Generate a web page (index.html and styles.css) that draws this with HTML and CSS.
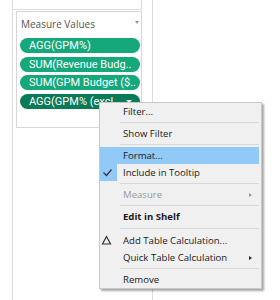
FILE: index.html
```html
<!DOCTYPE html>
<html>
<head>
<meta charset="utf-8">
<link rel="stylesheet" href="styles.css">
</head>
<body>
<div class="panel">
  <div class="prev"></div>
  <div class="card">
    <div class="card-head"><span class="title">Measure Values</span><span class="caret"></span></div>
    <div class="pills">
      <div class="pill">AGG(GPM%)</div>
      <div class="pill">SUM(Revenue Budg..</div>
      <div class="pill">SUM(GPM Budget ($..</div>
      <div class="pill sel">AGG(GPM% (excl..<span class="pcaret"></span></div>
    </div>
  </div>
</div>
<div class="menu">
  <div class="item"><span class="gut"></span><span class="label">Filter...</span></div>
  <div class="sep"></div>
  <div class="item"><span class="gut"></span><span class="label">Show Filter</span></div>
  <div class="sep"></div>
  <div class="item hl"><span class="gut"></span><span class="label">Format...</span></div>
  <div class="item"><span class="gut checked"><svg width="17" height="17" viewBox="0 0 17 17"><polyline points="3.5,8.5 6.5,11.5 11.5,5.5" fill="none" stroke="#333" stroke-width="1.2"/></svg></span><span class="label">Include in Tooltip</span></div>
  <div class="sep"></div>
  <div class="item disabled"><span class="gut"></span><span class="label">Measure</span><span class="sub grey"></span></div>
  <div class="sep"></div>
  <div class="item bold"><span class="gut"></span><span class="label">Edit in Shelf</span></div>
  <div class="sep wide"></div>
  <div class="item"><span class="gut"><svg width="17" height="17" viewBox="0 0 17 17"><polygon points="6.5,4.5 10.5,12 2.5,12" fill="none" stroke="#333" stroke-width="1.2"/></svg></span><span class="label">Add Table Calculation...</span></div>
  <div class="item"><span class="gut"></span><span class="label">Quick Table Calculation</span><span class="sub"></span></div>
  <div class="sep"></div>
  <div class="item"><span class="gut"></span><span class="label">Remove</span></div>
</div>
</body>
</html>
```
FILE: styles.css
```css
html, body {
  margin: 0;
  padding: 0;
  background: #ffffff;
}
body {
  width: 280px;
  height: 300px;
  overflow: hidden;
  position: relative;
  font-family: "Open Sans", sans-serif;
}
.panel {
  margin-left: 12px;
  width: 139px;
  height: 300px;
  border-left: 1px solid #dcdcdc;
  border-right: 1px solid #dcdcdc;
}
.prev {
  height: 9px;
  width: 128px;
  border-right: 1px solid #dcdcdc;
  border-bottom: 1px solid #dcdcdc;
}
.card {
  margin: 1px 0 0 3px;
  width: 124px;
  height: 115px;
  border: 1px solid #d6d6d6;
  background: #fff;
}
.card-head {
  display: flex;
  align-items: center;
  justify-content: space-between;
  height: 22px;
  padding: 0 2px 0 4px;
  margin-top: 1px;
}
.title {
  font-size: 10px;
  color: #555;
}
.caret {
  width: 0;
  height: 0;
  border-left: 2.5px solid transparent;
  border-right: 2.5px solid transparent;
  border-top: 3px solid #999;
  margin-top: -4px;
}
.pills {
  display: flex;
  flex-direction: column;
  gap: 3.5px;
  padding: 3px 1px 0 3px;
}
.pill {
  height: 15px;
  line-height: 15px;
  border-radius: 7.5px;
  background: #14a87b;
  color: #fff;
  font-family: "Roboto", sans-serif;
  font-size: 11px;
  padding-left: 9px;
  white-space: nowrap;
  overflow: hidden;
  display: flex;
  align-items: center;
}
.pill.sel {
  background: #0b7a57;
}
.pcaret {
  margin-left: auto;
  margin-right: 8px;
  width: 0;
  height: 0;
  border-left: 3px solid transparent;
  border-right: 3px solid transparent;
  border-top: 3px solid #fff;
}
.menu {
  position: absolute;
  left: 99px;
  top: 102px;
  width: 161px;
  padding: 0;
  background: #f0f0f0;
  border: 1px solid #c8c8c8;
  box-shadow: 2px 2px 2px rgba(0, 0, 0, 0.35);
  font-size: 9.6px;
  color: #1a1a1a;
}
.item {
  display: flex;
  align-items: center;
  height: 17px;
  margin-right: 2px;
}
.gut {
  width: 17px;
  height: 17px;
  flex: none;
  margin-right: 6px;
}
.gut svg {
  display: block;
}
.gut.checked {
  background: #91c9f7;
}
.item.hl {
  background: #91c9f7;
}
.item.disabled {
  color: #9a9a9a;
}
.item.bold {
  font-weight: bold;
}
.sub {
  margin-left: auto;
  margin-right: 7px;
  width: 0;
  height: 0;
  border-top: 2.5px solid transparent;
  border-bottom: 2.5px solid transparent;
  border-left: 3px solid #222;
}
.sub.grey {
  border-left-color: #9a9a9a;
}
.sep {
  height: 1px;
  background: #d8d8d8;
  margin: 2px 2px 2px 20px;
}
.sep.wide {
  margin: 3px 2px 3px 20px;
}
```
